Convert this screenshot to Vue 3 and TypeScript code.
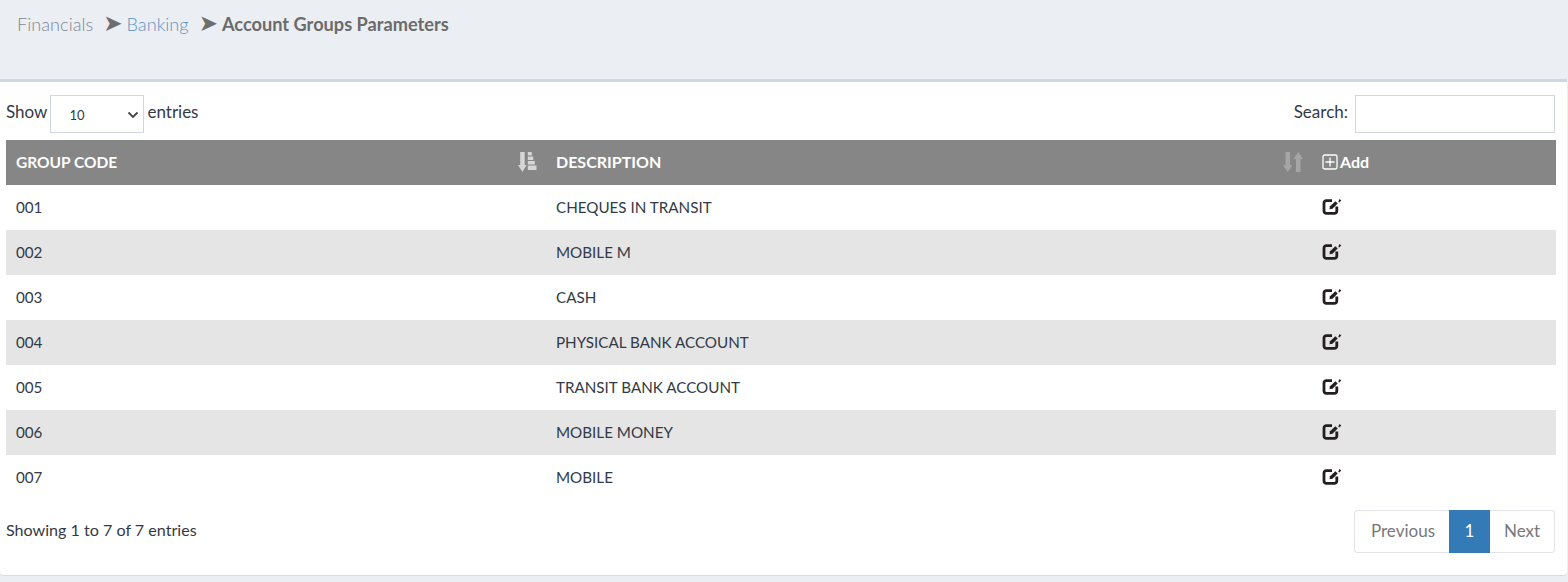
<script setup lang="ts">
interface Row { code: string; description: string }
const rows: Row[] = [
  { code: '001', description: 'CHEQUES IN TRANSIT' },
  { code: '002', description: 'MOBILE M' },
  { code: '003', description: 'CASH' },
  { code: '004', description: 'PHYSICAL BANK ACCOUNT' },
  { code: '005', description: 'TRANSIT BANK ACCOUNT' },
  { code: '006', description: 'MOBILE MONEY' },
  { code: '007', description: 'MOBILE' },
]
</script>

<template>
  <div class="page">
    <header class="crumbs">
      <span class="c-fin">Financials</span>
      <span class="arrow">➤</span>
      <span class="c-bank">Banking</span>
      <span class="arrow">➤</span>
      <strong class="c-cur">Account Groups Parameters</strong>
    </header>
    <main class="card">
      <div class="controls">
        <div class="show">
          <span class="lbl">Show</span>
          <span class="select">10
            <svg width="12" height="8" viewBox="0 0 12 8"><path d="M1.500 1.500 6 6l4.500-4.500" fill="none" stroke="#444" stroke-width="1.800"/></svg>
          </span>
          <span class="lbl">entries</span>
        </div>
        <div class="search"><span class="lbl">Search:</span> <span class="input"></span></div>
      </div>
      <table>
        <colgroup><col class="c1" /><col class="c2" /><col /></colgroup>
        <thead>
          <tr>
            <th>
              <div class="th-in"><span class="t1">GROUP CODE</span>
                <svg class="sort on" width="20" height="20" viewBox="0 0 20 20">
                  <path d="M3.200 0h4.500v13h2L5.400 20 1 13h2.200z" />
                  <path d="M10.800 0h4v3.500h-4zM10.800 4.500h5.500v3.500h-5.500zM10.800 9h7v3.500h-7zM10.800 13.500h8.700v4.500h-8.700z" />
                </svg>
              </div>
            </th>
            <th>
              <div class="th-in"><span>DESCRIPTION</span>
                <svg class="sort" width="20" height="20" viewBox="0 0 20 20">
                  <path d="M2.500 0h4.500v13h2.500L4.800 20 0 13h2.500z" />
                  <path d="M13 20h4.500V7H20L15.200 0 10.500 7H13z" />
                </svg>
              </div>
            </th>
            <th>
              <span class="add">
                <svg width="16" height="16" viewBox="0 0 16 16" fill="none" stroke="#fff" stroke-width="1.300"><rect x="1" y="1" width="14" height="14" rx="1.800"/><path d="M8 3.500v9M3.500 8h9"/></svg>Add
              </span>
            </th>
          </tr>
        </thead>
        <tbody>
          <tr v-for="r in rows" :key="r.code">
            <td>{{ r.code }}</td>
            <td>{{ r.description }}</td>
            <td class="act">
              <svg class="edit" width="20" height="18" viewBox="0 0 20 18" fill="none">
                <path d="M10 2.600H4.400A2.400 2.400 0 0 0 2 5v8a2.400 2.400 0 0 0 2.400 2.400h8A2.400 2.400 0 0 0 14.800 13V8.500" stroke="#231f20" stroke-width="2.800"/>
                <path d="M7.500 11.300l.5-3 5.400-5 2.300 2.300-5.200 5.200z" fill="#231f20"/>
                <path d="M16.300 3.800 17.500 1 19.300 2.600 17.200 4.600z" fill="#231f20"/>
              </svg>
            </td>
          </tr>
        </tbody>
      </table>
      <div class="foot">
        <span class="info">Showing 1 to 7 of 7 entries</span>
        <nav class="pager">
          <span class="pg first">Previous</span>
          <span class="pg cur">1</span>
          <span class="pg last">Next</span>
        </nav>
      </div>
    </main>
  </div>
</template>

<style>
html, body { margin: 0; background: #ebeef3; }
</style>

<style scoped>
.page {
  height: 582px;
  background: #ebeef3;
  font-family: Lato, "Noto Sans", sans-serif;
  font-size: 16px;
  color: #333a45;
  overflow: hidden;
}
.crumbs {
  height: 79px;
  box-sizing: border-box;
  padding: 12px 0 0 17px;
  font-size: 18.200px;
  line-height: 22px;
  display: flex;
  align-items: baseline;
}
.c-fin { color: #808794; font-weight: 300; }
.c-bank { color: #5b94c2; font-weight: 300; }
.arrow { color: #6e6e6e; font-size: 23px; margin: 0 4px 0 10px; font-family: "DejaVu Sans", sans-serif; }
.c-cur { color: #6b6b6b; font-weight: 700; }
.card {
  margin-right: 1px;
  height: 497px;
  box-sizing: border-box;
  background: #fff;
  border-top: 3px solid #d2d6e3;
  border-bottom: 1px solid #d8dbe2;
  border-radius: 0 0 4px 4px;
  padding: 13px 11px 0 6px;
}
.controls {
  display: flex;
  justify-content: space-between;
  align-items: center;
  height: 38px;
  margin-bottom: 7px;
  margin-right: 1px;
  font-size: 17px;
}
.lbl { margin-bottom: 6px; }
.show, .search { display: flex; align-items: center; gap: 3px; }
.search { gap: 7px; }
.select {
  width: 94px;
  height: 38px;
  box-sizing: border-box;
  border: 1px solid #d2d6e3;
  padding: 2px 4px 0 18px;
  font-size: 13px;
  display: flex;
  align-items: center;
  justify-content: space-between;
}
.input {
  width: 200px;
  height: 38px;
  box-sizing: border-box;
  border: 1px solid #d2d6e3;
  display: block;
}
table { width: 1550px; border-collapse: collapse; table-layout: fixed; }
.c1 { width: 540px; }
.c2 { width: 766px; }
th {
  height: 45px;
  padding: 0 10px 2px;
  box-sizing: border-box;
  background: #868686;
  color: #fff;
  font-size: 16px;
  font-weight: 700;
  text-align: left;
}
.t1 { font-size: 15.500px; }
.th-in { display: flex; align-items: center; justify-content: space-between; height: 20px; }
.sort { fill: #a5a5a5; margin-top: 1px; margin-right: -1px; flex: none; }
.sort.on { fill: #d6d6d6; }
.add { display: flex; align-items: center; gap: 2px; }
td { height: 45px; padding: 0 10px 2px; font-size: 15.200px; box-sizing: border-box; }
td.act { padding-bottom: 0; }
tbody tr:nth-child(even) td { background: #e5e5e5; }
.edit { display: block; margin-top: -1px; }
.foot {
  display: flex;
  justify-content: space-between;
  align-items: center;
  margin-top: 10px;
  margin-right: 1px;
  height: 43px;
}
.info { margin-top: -4px; font-size: 16.100px; }
.pager {
  display: flex;
  height: 43px;
  color: #777;
  font-size: 17px;
}
.pg {
  display: flex;
  align-items: center;
  justify-content: center;
  box-sizing: border-box;
  border: 1px solid #e2e3e6;
  padding-bottom: 2px;
}
.first { width: 95px; padding-left: 2px; border-radius: 4px 0 0 4px; border-right: 0; }
.cur { width: 41px; background: #337ab7; color: #fff; border-color: #337ab7; }
.last { width: 65px; border-radius: 0 4px 4px 0; border-left: 0; }
</style>
